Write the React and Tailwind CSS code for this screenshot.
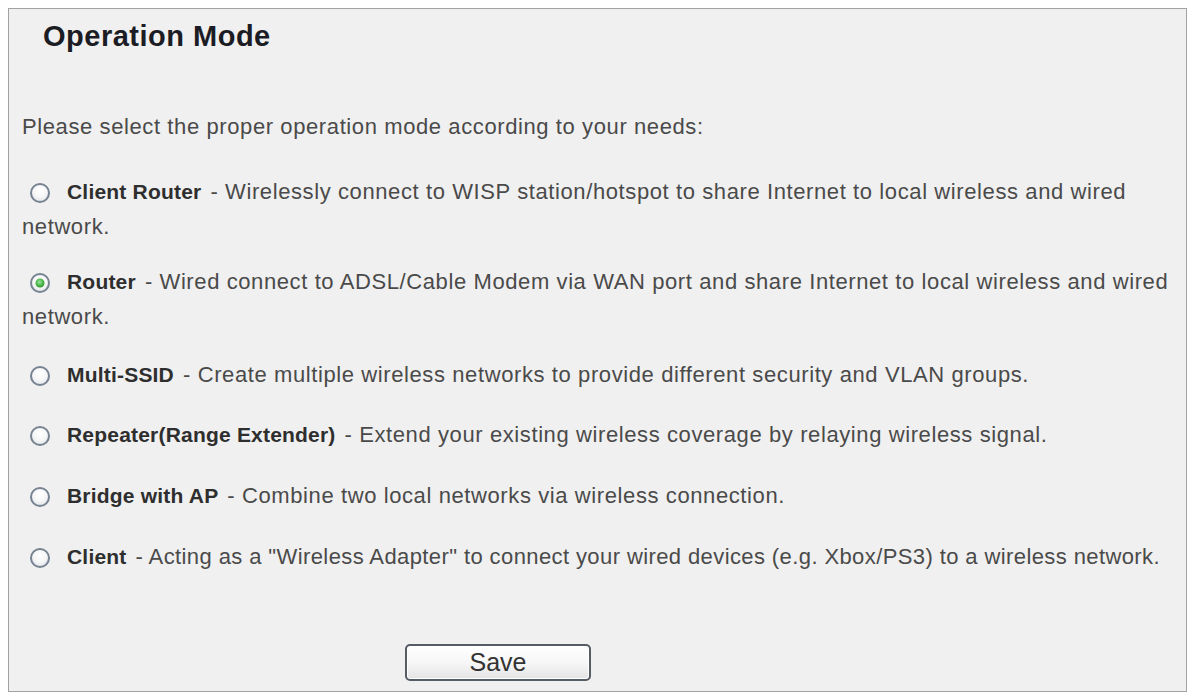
import React from "react";

const FONT = { fontFamily: '"Liberation Sans", Arial, sans-serif' };

function Radio({ checked }) {
  return (
    <span className="relative inline-block align-[-4px] ml-[8px] mr-[17px] w-[20px] h-[20px] rounded-full border-[2px] border-[#778391] bg-[radial-gradient(circle_at_50%_35%,#ffffff_0%,#f6f6f6_50%,#d9dee3_100%)]">
      {checked && (
        <span className="absolute left-1/2 top-1/2 -translate-x-1/2 -translate-y-1/2 w-[9px] h-[9px] rounded-full bg-[radial-gradient(circle_at_45%_40%,#9be69b_0%,#3fae3f_55%,#1f7a22_100%)]" />
      )}
    </span>
  );
}

const modes = [
  {
    name: "Client Router",
    desc: "- Wirelessly connect to WISP station/hotspot to share Internet to local wireless and wired network.",
    gap: "mt-[30px]",
  },
  {
    name: "Router",
    desc: "- Wired connect to ADSL/Cable Modem via WAN port and share Internet to local wireless and wired network.",
    gap: "mt-[20px]",
    checked: true,
  },
  {
    name: "Multi-SSID",
    desc: "- Create multiple wireless networks to provide different security and VLAN groups.",
    gap: "mt-[23px]",
  },
  {
    name: "Repeater(Range Extender)",
    desc: "- Extend your existing wireless coverage by relaying wireless signal.",
    gap: "mt-[25px]",
  },
  {
    name: "Bridge with AP",
    desc: "- Combine two local networks via wireless connection.",
    gap: "mt-[26px]",
  },
  {
    name: "Client",
    desc: '- Acting as a "Wireless Adapter" to connect your wired devices (e.g. Xbox/PS3) to a wireless network.',
    gap: "mt-[26px]",
    tight: true,
  },
];

export default function App() {
  return (
    <div className="w-[1190px] h-[692px] bg-white pl-[8px] pt-[8px] overflow-hidden" style={FONT}>
      <div className="w-[1179px] h-[684px] bg-[#f0f0f0] border border-[#a2a2a2] flex flex-col pt-[10px] pl-[13px] pr-[4px]">
        <h1 className="ml-[21px] text-[29px] leading-[34px] font-bold tracking-[0.5px] text-[#1c1c24]">
          Operation Mode
        </h1>

        <div className="mt-[56px] text-[22px] leading-[35px] tracking-[0.6px] text-[#4a4a4a]">
          <p>Please select the proper operation mode according to your needs:</p>

          {modes.map((m) => (
            <p key={m.name} className={m.gap}>
              <Radio checked={m.checked} />
              <b className="mr-[9px] text-[21px] tracking-[0.2px] font-bold text-[#2e2e2e]">{m.name}</b>
              <span className={m.tight ? "tracking-[0.4px]" : ""}>{m.desc}</span>
            </p>
          ))}
        </div>

        <div className="mt-[70px] pl-[383px]">
          <button className="w-[186px] h-[37px] rounded-[5px] border-[2px] border-[#565c64] bg-gradient-to-b from-[#ffffff] via-[#f7f7f7] to-[#e4e4e4] text-[25px] leading-none text-[#333] shadow-[inset_0_0_0_1px_#ffffff]">
            Save
          </button>
        </div>
      </div>
    </div>
  );
}
